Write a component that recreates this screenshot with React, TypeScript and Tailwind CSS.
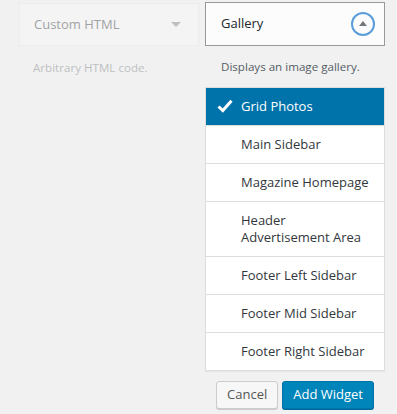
import React from 'react';

const areas = [
    'Grid Photos',
    'Main Sidebar',
    'Magazine Homepage',
    'Header Advertisement Area',
    'Footer Left Sidebar',
    'Footer Mid Sidebar',
    'Footer Right Sidebar',
];

const font = { fontFamily: '"Open Sans", "Noto Sans", sans-serif' };

const App = () => {
    return (
        <div className="w-[397px] h-[414px] bg-[#f1f1f1] overflow-hidden" style={font}>
            <div className="flex gap-[6px] pl-[19px] pt-[2px]">
                {/* faded widget on the left */}
                <div className="w-[180px] opacity-40">
                    <div className="mt-[1px] h-[43px] bg-[#fafafa] border border-[#e5e5e5] flex items-center justify-between pl-[14px] pr-[17px]">
                        <span className="text-[13px] text-[#23282d]">Custom HTML</span>
                        <span className="w-0 h-0 border-l-[5px] border-r-[5px] border-t-[5px] border-l-transparent border-r-transparent border-t-[#72777c]" />
                    </div>
                    <p className="mt-[13px] pl-[14px] text-[11.6px] text-[#72777c]">Arbitrary HTML code.</p>
                </div>

                {/* open chooser */}
                <div className="w-[180px]">
                    <div className="h-[44px] bg-[#fcfcfc] border border-[#999] flex items-center justify-between pl-[15px] pr-[9px]">
                        <span className="text-[13px] text-[#23282d]">Gallery</span>
                        <span className="w-[24px] h-[24px] rounded-full border-2 border-[#5b9dd9] flex items-center justify-center">
                            <span className="w-0 h-0 border-l-[4px] border-r-[4px] border-b-[5px] border-l-transparent border-r-transparent border-b-[#72777c] -mt-[1px]" />
                        </span>
                    </div>
                    <p className="mt-[12px] pl-[16px] text-[11.6px] leading-[18px] text-[#555d66]">Displays an image gallery.</p>
                    <ul className="mt-[11px] bg-white border border-[#ddd] shadow-[0_1px_1px_rgba(0,0,0,0.04)]">
                        {areas.map((name, i) => (
                            <li
                                key={name}
                                className={
                                    i === 0
                                        ? 'relative bg-[#0073aa] text-white pl-[35px] pr-[10px] py-[10px] text-[13px] leading-[17px]'
                                        : 'relative border-t border-[#ddd] text-[#32373c] pl-[35px] pr-[12px] py-[10px] text-[13px] leading-[17px]'
                                }
                            >
                                {i === 0 && (
                                    <svg className="absolute left-[11px] top-[11px]" width="16" height="14" viewBox="0 0 16 14">
                                        <path d="M1.5 7.5 L5.8 11.5 L14.5 1.8" fill="none" stroke="white" strokeWidth="3" strokeLinejoin="miter" />
                                    </svg>
                                )}
                                {name}
                            </li>
                        ))}
                    </ul>
                    <div className="mt-[10px] flex justify-center gap-[4px]">
                        <button className="h-[28px] px-[10px] rounded-[3px] border border-[#ccc] bg-[#f7f7f7] text-[13px] text-[#555] shadow-[0_1px_0_#ccc]">
                            Cancel
                        </button>
                        <button className="h-[28px] px-[10px] rounded-[3px] border border-[#0073aa] bg-[#0085ba] text-[13px] text-white shadow-[0_1px_0_#006799]">
                            Add Widget
                        </button>
                    </div>
                </div>
            </div>
        </div>
    );
};

export default App;
